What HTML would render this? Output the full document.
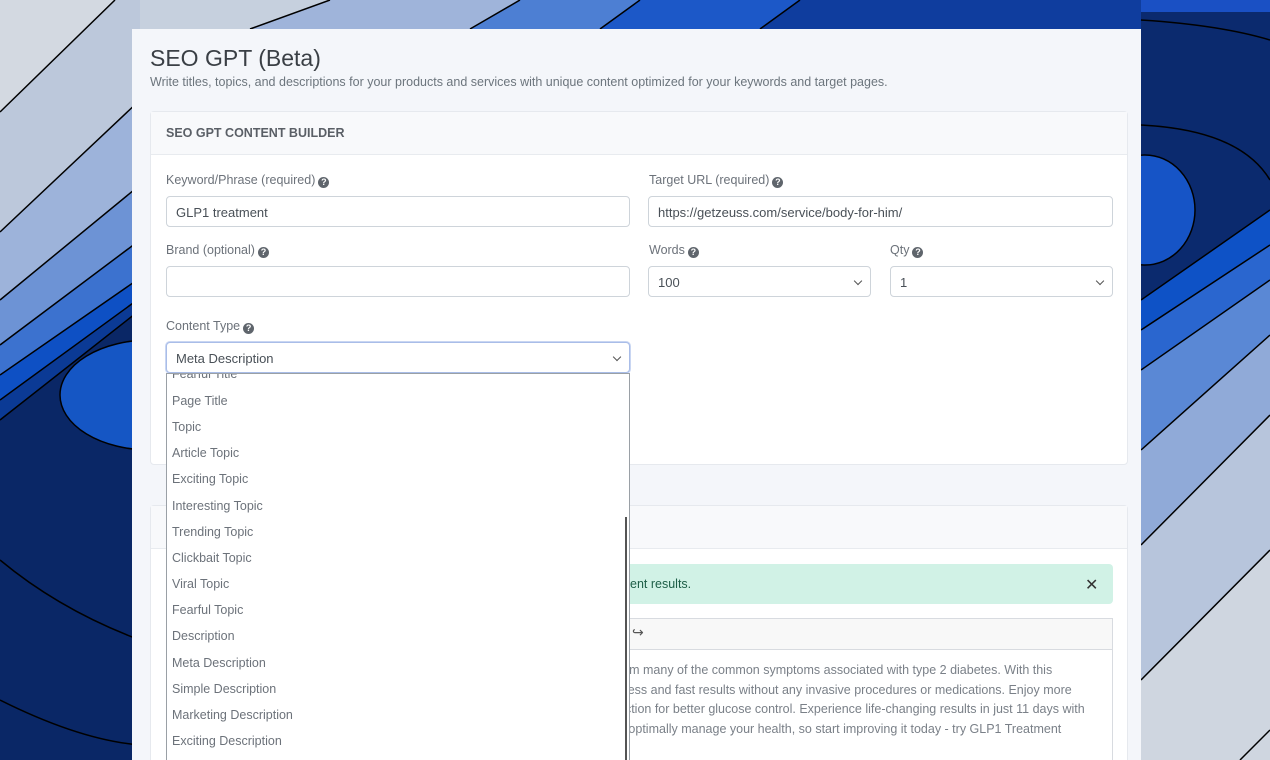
<!DOCTYPE html>
<html style="width:1270px;height:760px;overflow:hidden"><head><meta charset="utf-8"><style>
*{box-sizing:border-box;margin:0;padding:0}
body{width:1270px;height:760px;overflow:hidden;position:relative;font-family:"Liberation Sans",sans-serif;background:#1a4fc0}
.bg{position:absolute;left:0;top:0}
.page{position:absolute;left:132px;top:29px;width:1009px;height:731px;background:#f4f6fa}
.abs{position:absolute}
h1{position:absolute;left:18px;top:16px;font-size:23px;font-weight:normal;color:#3a3f45}
.sub{position:absolute;left:18px;top:46px;font-size:12.5px;color:#6c757d}
.card{position:absolute;background:#fff;border:1px solid #e6e9ee;border-radius:4px}
.ch{height:43px;background:#f8f9fb;border-bottom:1px solid #e8ebef;padding:14px 15px;font-size:12.5px;font-weight:bold;color:#5a5f66}
.lbl{position:absolute;font-size:12.5px;color:#6c727a}
.q{display:inline-block;width:11px;height:11px;border-radius:50%;background:#5f656c;color:#fff;font-size:9px;font-weight:bold;text-align:center;line-height:11px;vertical-align:-1px;margin-left:3px}
.inp{position:absolute;height:31px;border:1px solid #ced4da;border-radius:4px;background:#fff;font-size:13px;color:#495057;padding:8px 9px}
.chev{position:absolute;right:9px;top:11px;width:6px;height:6px;border-right:1.5px solid #555;border-bottom:1.5px solid #555;transform:rotate(45deg)}
.dd{position:absolute;left:166px;top:373px;width:464px;height:387px;background:#fff;border:1px solid #9aa0a6;border-bottom:none;overflow:hidden}
.dd div{position:absolute;left:5px;font-size:12.5px;color:#6c727a}
.t{position:absolute;left:618px;font-size:12.5px;color:#7a8088;white-space:nowrap}
</style></head><body>
<svg class="bg" width="1270" height="760" viewBox="0 0 1270 760">
<rect width="1270" height="760" fill="#0c2a6e"/>
<polygon points="0,0 140,0 140,760 0,760" fill="#0a2766"/>
<polygon points="0,0 115,0 0,112" fill="#d3d9e1"/>
<polygon points="0,112 115,0 140,0 140,100 0,232" fill="#bcc8db"/>
<polygon points="0,232 140,100 140,185 0,300" fill="#9db3da"/>
<polygon points="0,300 140,185 140,240 0,345" fill="#6d93d5"/>
<polygon points="0,345 140,240 140,278 0,375" fill="#3c72cf"/>
<polygon points="0,375 140,278 140,298 0,400" fill="#0e50c4"/>
<polygon points="0,400 140,298 140,310 0,420" fill="#0b3a95"/>
<ellipse cx="150" cy="395" rx="90" ry="55" fill="#1556c4" stroke="#000" stroke-width="1.5"/>
<path d="M0,112 L115,0 M0,232 L140,100 M0,300 L140,185 M0,345 L140,240 M0,375 L140,278 M0,400 L140,298 M0,420 L140,310 M0,560 Q60,610 140,640 M0,700 Q80,740 140,745" stroke="#000" stroke-width="1.5" fill="none"/>
<polygon points="140,0 330,0 250,29 140,29" fill="#c6d0de"/>
<polygon points="330,0 520,0 470,29 250,29" fill="#9fb4da"/>
<polygon points="520,0 640,0 600,29 470,29" fill="#4d7fd3"/>
<polygon points="640,0 800,0 760,29 600,29" fill="#1c58c8"/>
<polygon points="800,0 1141,0 1141,29 760,29" fill="#0f3d9e"/>
<path d="M330,0 L250,29 M520,0 L470,29 M640,0 L600,29 M800,0 L760,29" stroke="#000" stroke-width="1.5"/>
<polygon points="1141,0 1270,0 1270,760 1141,760" fill="#0b2a6e"/>
<polygon points="1141,0 1270,0 1270,12 1141,12" fill="#1a50c4"/>
<ellipse cx="1145" cy="210" rx="50" ry="55" fill="#1654c6" stroke="#000" stroke-width="1.5"/>
<polygon points="1141,300 1270,210 1270,760 1141,760" fill="#0e52c6"/>
<polygon points="1141,330 1270,245 1270,760 1141,760" fill="#2a66cf"/>
<polygon points="1141,370 1270,280 1270,760 1141,760" fill="#5a88d5"/>
<polygon points="1141,450 1270,335 1270,760 1141,760" fill="#90aad8"/>
<polygon points="1141,545 1270,415 1270,760 1141,760" fill="#b7c5dc"/>
<polygon points="1141,680 1270,550 1270,760 1141,760" fill="#cfd6e0"/>
<path d="M1141,300 L1270,210 M1141,330 L1270,245 M1141,370 L1270,280 M1141,450 L1270,335 M1141,545 L1270,415 M1141,680 L1270,550 M1141,20 Q1220,25 1270,40 M1141,125 Q1240,130 1270,180 M1240,760 L1270,730" stroke="#000" stroke-width="1.5" fill="none"/>
</svg>
<div class="page">
<h1>SEO GPT (Beta)</h1>
<div class="sub">Write titles, topics, and descriptions for your products and services with unique content optimized for your keywords and target pages.</div>
</div>
<div class="card" style="left:150px;top:111px;width:978px;height:354px"><div class="ch">SEO GPT CONTENT BUILDER</div></div>
<div class="lbl" style="left:166px;top:173px">Keyword/Phrase (required)<span class="q">?</span></div>
<div class="inp" style="left:166px;top:196px;width:464px">GLP1 treatment</div>
<div class="lbl" style="left:649px;top:173px">Target URL (required)<span class="q">?</span></div>
<div class="inp" style="left:648px;top:196px;width:465px">https://getzeuss.com/service/body-for-him/</div>
<div class="lbl" style="left:166px;top:243px">Brand (optional)<span class="q">?</span></div>
<div class="inp" style="left:166px;top:266px;width:464px"></div>
<div class="lbl" style="left:649px;top:243px">Words<span class="q">?</span></div>
<div class="inp" style="left:648px;top:266px;width:223px">100<span class="chev"></span></div>
<div class="lbl" style="left:890px;top:243px">Qty<span class="q">?</span></div>
<div class="inp" style="left:890px;top:266px;width:223px">1<span class="chev"></span></div>
<div class="lbl" style="left:166px;top:319px">Content Type<span class="q">?</span></div>
<div class="inp" style="left:166px;top:342px;width:464px;border-color:#a9bde8;box-shadow:0 0 0 1px #c9d6f2">Meta Description<span class="chev"></span></div>

<div class="card" style="left:150px;top:505px;width:978px;height:255px;border-bottom:none;border-radius:4px 4px 0 0"><div class="ch" style="height:43px"></div></div>
<div class="abs" style="left:166px;top:564px;width:947px;height:40px;background:#d1f2e6;border-radius:4px"></div>
<div class="abs" style="left:630px;top:577px;font-size:12.5px;color:#1d5e47">ent results.</div>
<div class="abs" style="left:1085px;top:575px;font-size:16px;color:#333">✕</div>
<div class="abs" style="left:166px;top:618px;width:947px;height:142px;border:1px solid #d8dbe0;border-bottom:none;background:#fff"></div>
<div class="abs" style="left:167px;top:619px;width:945px;height:31px;background:#f8f8f8;border-bottom:1px solid #d8dbe0"></div>
<div class="abs" style="left:632px;top:624px;font-size:14px;color:#555">↪</div>
<div class="t" style="top:663px">rom many of the common symptoms associated with type 2 diabetes. With this</div>
<div class="t" style="top:683px">nless and fast results without any invasive procedures or medications. Enjoy more</div>
<div class="t" style="top:702px">nction for better glucose control. Experience life-changing results in just 11 days with</div>
<div class="t" style="top:722px">o optimally manage your health, so start improving it today - try GLP1 Treatment</div>

<div class="dd">
<div style="top:-7px">Fearful Title</div>
<div style="top:20px">Page Title</div>
<div style="top:46px">Topic</div>
<div style="top:72px">Article Topic</div>
<div style="top:98px">Exciting Topic</div>
<div style="top:125px">Interesting Topic</div>
<div style="top:151px">Trending Topic</div>
<div style="top:177px">Clickbait Topic</div>
<div style="top:203px">Viral Topic</div>
<div style="top:229px">Fearful Topic</div>
<div style="top:255px">Description</div>
<div style="top:282px">Meta Description</div>
<div style="top:308px">Simple Description</div>
<div style="top:334px">Marketing Description</div>
<div style="top:360px">Exciting Description</div>
<span style="position:absolute;left:458px;top:143px;width:2px;height:260px;background:#555"></span>
</div>
</body></html>
